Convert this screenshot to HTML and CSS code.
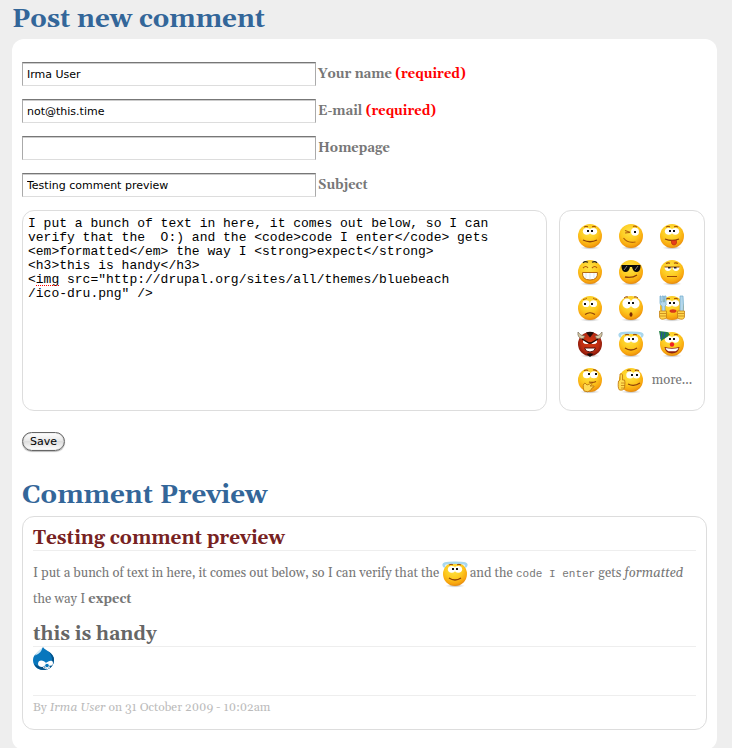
FILE: index.html
```
<!DOCTYPE html>
<html lang="en">
<head>
<meta charset="utf-8">
<title>Post new comment</title>
<link rel="stylesheet" href="styles.css">
</head>
<body>
<svg class="defs" aria-hidden="true">
  <defs>
    <radialGradient id="gold" cx="45%" cy="32%" r="68%">
      <stop offset="0" stop-color="#ffe648"/><stop offset=".55" stop-color="#fdc91f"/><stop offset=".85" stop-color="#f8a60f"/><stop offset="1" stop-color="#e58b10"/>
    </radialGradient>
    <radialGradient id="red" cx="50%" cy="45%" r="60%">
      <stop offset="0" stop-color="#d83a12"/><stop offset=".65" stop-color="#b92a10"/><stop offset="1" stop-color="#701208"/>
    </radialGradient>
    <radialGradient id="shade"><stop offset="0" stop-color="#777" stop-opacity=".6"/><stop offset="1" stop-color="#aaa" stop-opacity="0"/></radialGradient>
    <symbol id="ball" viewBox="0 0 28 28"><ellipse cx="14" cy="25.8" rx="10" ry="1.9" fill="url(#shade)"/><circle cx="14" cy="14" r="12" fill="url(#gold)"/></symbol>
    <symbol id="eyes" viewBox="0 0 28 28"><ellipse cx="10.7" cy="9.3" rx="3.8" ry="3.4" fill="#fff"/><ellipse cx="17.3" cy="9.3" rx="3.8" ry="3.4" fill="#fff"/><path d="M11 8h2v2h-2zM15 8h2v2h-2z" fill="#111"/><path d="M8 5q2-1.3 4-.2M16 4.8q2-1.1 4 .2" fill="none" stroke="#9c4a08"/></symbol>
    <symbol id="angel" viewBox="0 0 28 28"><use href="#ball"/><path d="M4 7C0 3.500 5 2.800 14 2.800S28 3.500 24 7" fill="none" stroke="#a9d7ee" stroke-width="2.6"/><use href="#eyes"/><path d="M8 18q6 4 12 0" fill="none" stroke="#8c3f08" stroke-width="1.3"/></symbol>
  </defs>
</svg>
<main class="page">
  <h1 class="heading">Post new comment</h1>
  <div class="content">
    <form class="comment-form">
      <div class="field"><input id="name" type="text" value="Irma User"><label for="name">Your name <span class="required">(required)</span></label></div>
      <div class="field"><input id="mail" type="text" value="not@this.time"><label for="mail">E-mail <span class="required">(required)</span></label></div>
      <div class="field"><input id="homepage" type="text"><label for="homepage">Homepage</label></div>
      <div class="field"><input id="subject" type="text" value="Testing comment preview"><label for="subject">Subject</label></div>
      <div class="editor">
        <div class="editor-text">
          <textarea aria-label="Comment" spellcheck="false">I put a bunch of text in here, it comes out below, so I can
verify that the  O:) and the &lt;code&gt;code I enter&lt;/code&gt; gets
&lt;em&gt;formatted&lt;/em&gt; the way I &lt;strong&gt;expect&lt;/strong&gt;
&lt;h3&gt;this is handy&lt;/h3&gt;
&lt;img src="http://drupal.org/sites/all/themes/bluebeach
/ico-dru.png" /&gt;</textarea>
          <span class="spelling"></span>
        </div>
        <div class="smileys">
          <svg viewBox="0 0 28 28"><use href="#ball"/><use href="#eyes"/><path d="M7 18q7 3.5 14 0" fill="none" stroke="#8c3f08" stroke-width="1.3"/></svg>
          <svg viewBox="0 0 28 28"><use href="#ball"/><circle cx="18" cy="9.800" r="4" fill="#fff"/><path d="M17 9h2v2h-2z" fill="#111"/><path d="M8 8.500l5 1.800-5 .7M6.500 16q4 5.500 12 4M16 4.500q2-.8 4 .5" fill="none" stroke="#b0600c" stroke-width="1.2"/></svg>
          <svg viewBox="0 0 28 28"><use href="#ball"/><use href="#eyes"/><path d="M7 17q7 3 14 0" fill="none" stroke="#8c3f08" stroke-width="1.3"/><path d="M13.500 18.500h5v2.500q-.5 2-2.500 2t-2.500-2z" fill="#e63d18" stroke="#b52d12" stroke-width=".7"/></svg>

          <svg viewBox="0 0 28 28"><use href="#ball"/><path d="M7 10q3-3 5 0M16 10q3-3 5 0" fill="none" stroke="#b45a08" stroke-width="1.2"/><path d="M7 4.800q2-2 5-.5M16 4.300q3-1.500 5 .5" fill="none" stroke="#222" stroke-width="1.200"/><path d="M6.500 14.500h15q.5 7.500-7.500 7.500t-7.500-7.500z" fill="#fff" stroke="#b46a10"/><path d="M10 15v5M14 15v6M18 15v5" stroke="#c6e1ef" stroke-width=".7"/></svg>
          <svg viewBox="0 0 28 28"><use href="#ball"/><path d="M4.500 7h19v2q-.5 5-4 5t-4.500-5h-2q-1 5-4.500 5t-4-5z" fill="#0b0b0b"/><path d="M7 12l3-4M18 12l3-4" stroke="#858585"/><path d="M8 19q7 1.500 12-2" fill="none" stroke="#8c3f08" stroke-width="1.300"/></svg>
          <svg viewBox="0 0 28 28"><use href="#ball"/><path d="M6.500 9h7q-.3 4-3.500 4t-3.500-4zM14.500 9h7q-.3 4-3.500 4t-3.500-4z" fill="#fff"/><path d="M8 5.500q2-1 4-.3M16 5.200q2-.7 4 .3M6.500 9h15M9 18.500h10" fill="none" stroke="#9c4a08" stroke-width="1.200"/><path d="M10 9h2.500v1.500H10zM16 9h2.500v1.500H16z" fill="#222"/></svg>

          <svg viewBox="0 0 28 28"><use href="#ball"/><ellipse cx="10" cy="9.700" rx="3.600" ry="3.400" fill="#fff"/><ellipse cx="17.500" cy="9.700" rx="3.600" ry="3.400" fill="#fff"/><path d="M8 9h2v2H8zM15 9h2v2h-2z" fill="#111"/><path d="M7 5.500q3-.3 4-1.500M17 4q1 1.200 4 1.500" fill="none" stroke="#b0600c"/><path d="M9 20.500q5-3.500 10 0" fill="none" stroke="#8c3f08" stroke-width="1.200"/></svg>
          <svg viewBox="0 0 28 28"><use href="#ball"/><ellipse cx="10" cy="9.500" rx="4.600" ry="5" fill="#fff"/><ellipse cx="18" cy="9.500" rx="4.600" ry="5" fill="#fff"/><path d="M11 8h2v2h-2zM15 8h2v2h-2z" fill="#111"/><path d="M7 4q2-2 4-1M17 3q2-1 4 1" fill="none" stroke="#9c4a08"/><ellipse cx="14" cy="20.500" rx="1.500" ry="2.300" fill="#7b2a04"/></svg>
          <svg viewBox="0 0 28 28"><use href="#ball"/><use href="#eyes"/><ellipse cx="15" cy="17" rx="3.500" ry="1.800" fill="#d93819"/><path d="M2 2v7q0 2 2 3v11h3V12q2-1 1-3V2H6.500v6h-1V2H4v6H3V2zM22 2h3q1 9 0 21h-3z" fill="#b5d8ec" stroke="#6eaacb" stroke-width=".7"/><path d="M1.500 17h7v7q-6 3-7-1zM19.500 17h7v6q-1 4-7 1zM2 19.500h6M2 22h6M20 19.500h6M20 22h6" fill="#ffd64b" stroke="#c78213" stroke-width=".8"/></svg>

          <svg viewBox="0 0 28 28"><ellipse cx="14" cy="25.800" rx="10" ry="1.900" fill="url(#shade)"/><circle cx="14" cy="14" r="12" fill="url(#red)"/><path d="M2 2q-1 6 5 7l2-3Q4 6 2 2zM26 2q1 6-5 7l-2-3q5 0 7-4z" fill="#d8c9a5" stroke="#786c58" stroke-width=".7"/><path d="M10 2.500q4-1.500 8 0l-4 5z" fill="#250d09"/><path d="M7 10l6 3.500q-4 1.500-6-1zM21 10l-6 3.500q4 1.500 6-1z" fill="#fff"/><path d="M6 9l7 4h2l7-4" fill="none" stroke="#260805" stroke-width="1.300"/><path d="M8.500 18h11q-1 4-5.500 4t-5.500-4z" fill="#fff" stroke="#570c06"/><path d="M10.500 24q3.500-1.500 7 0L14 27z" fill="#180b09"/></svg>
          <svg viewBox="0 0 28 28"><use href="#angel"/></svg>
          <svg viewBox="0 0 28 28"><use href="#ball"/><use href="#eyes"/><path d="M1 1l8 1q3 0 1.500 4L3 11z" fill="#238044"/><path d="M4 2l-1 7M7 2l-1 6" stroke="#24539b" stroke-width="1.200"/><path d="M6.500 17q7.500 2 15 0-1 6.500-7.500 6.500t-7.500-6.500z" fill="#8d2111"/><path d="M7.500 18q6.500 1.500 13 0-1 3-3 3.300h-7q-2-.3-3-3.300z" fill="#fff"/><circle cx="14" cy="14.500" r="2.200" fill="#f02025"/></svg>

          <svg viewBox="0 0 28 28"><use href="#ball"/><ellipse cx="10.700" cy="8.800" rx="3.900" ry="3.500" fill="#fff"/><ellipse cx="18" cy="8.800" rx="3.900" ry="3.500" fill="#fff"/><path d="M12 7h2v2h-2zM19 7h2v2h-2z" fill="#111"/><path d="M8 4.500q3-1 4 0M17 4q2-.5 4 1M13 16q4 1 7-.5" fill="none" stroke="#9c4a08" stroke-width="1.200"/><path d="M8 25q-2-7 1-8l2 2 5-2q1 1-2 3h4q1 1-2 2l-1 2q-3 3-7 1z" fill="#ffda54" stroke="#bf7910" stroke-width=".9"/></svg>
          <svg viewBox="0 0 28 28"><use href="#ball"/><ellipse cx="13" cy="9" rx="3.700" ry="3.500" fill="#fff"/><ellipse cx="19.500" cy="9" rx="3.700" ry="3.500" fill="#fff"/><path d="M14 8h2v2h-2zM19 8h2v2h-2z" fill="#111"/><path d="M10 4.500q2-1 4 0M18 4.500q2-1 4 0M11 18q6 3 12-1" fill="none" stroke="#8c3f08" stroke-width="1.200"/><path d="M3 14V8q2-1 2.500 1v5h2q1 1 0 8-1 3-5 2-2-2-1-9z" fill="#ffdc50" stroke="#c47d12" stroke-width=".9"/><path d="M4 17h4M4 19.500h4M4 22h3" stroke="#c47d12" stroke-width=".8"/></svg>
          <a href="#">more...</a>
        </div>
      </div>
      <button class="save" type="button">Save</button>
    </form>
    <h2 class="heading">Comment Preview</h2>
    <article class="preview">
      <h3 class="subject">Testing comment preview</h3>
      <p>I put a bunch of text in here, it comes out below, so I can verify that the <svg class="inline-smiley" viewBox="0 0 28 28"><use href="#angel"/></svg> and the <code>code I enter</code> gets <em>formatted</em> the way I <strong>expect</strong></p>
      <h3>this is handy</h3>
      <svg class="drop" viewBox="0 0 21 24"><path d="M10 0c2 4 11 5 11 13C21 19 16.500 23 10.500 23S0 19 0 13C0 6 8 5 10 0z" fill="#0877bd"/><path d="M15 4q6 4 6 9-.5 9-10 10-7 0-10-6 10 6 18-4 0-5-4-9z" fill="#045188"/><path d="M9 1q0 5-7 7.500Q3 5 9 1z" fill="#cfe8f6"/><path d="M5 17c0-5 6-4 8-1 2-2 7-4 7 0 0 4-4 3-6 1-2 1-3 3-5 3s-4-1-4-3z" fill="#fff"/><circle cx="14" cy="18.500" r="2.300" fill="#0877bd" stroke="#fff"/><path d="M10 20.500q4 2.500 7 0" fill="none" stroke="#fff"/></svg>
      <footer>By <em>Irma User</em> on 31 October 2009 - 10:02am</footer>
    </article>
  </div>
</main>
</body>
</html>
```
FILE: styles.css
```
* { box-sizing: border-box; }
body {
  margin: 0;
  background: #eee;
  color: #777;
  font: 13px/26px Georgia, Gelasio, "Liberation Serif", serif;
}
.defs { position: absolute; width: 0; height: 0; }
.page { padding: 0 15px 0 12px; }
h1, h2, h3, p { margin: 0; }
.heading { color: #369; font-size: 26px; line-height: 36px; }
.page > .heading { padding: 2px 0 1px; }
.content { padding: 23px 10px 20px; border-radius: 12px; background: #fff; }
.field { display: flex; align-items: center; gap: 2px; height: 24px; margin-bottom: 13px; }
.field input {
  width: 294px;
  height: 24px;
  padding: 0 4px;
  border: 1px solid #aaa;
  border-top-color: #777;
  border-bottom-color: #ddd;
  background: #fff;
  box-shadow: inset 0 1px #ccc;
  color: #000;
  font: 11px "Lucida Grande", "DejaVu Sans", sans-serif;
}
.field label { font-weight: bold; }
.required { color: red; }
.editor { display: flex; gap: 12px; padding-right: 2px; }
.editor-text { position: relative; flex: 1; display: flex; }
textarea {
  flex: 1;
  min-width: 0;
  height: 201px;
  padding: 6px 5px;
  border: 1px solid #ddd;
  border-radius: 12px;
  resize: none;
  color: #000;
  font: 13px/14px "Liberation Mono", monospace;
}
.spelling { position: absolute; left: 14px; top: 75px; width: 23px; border-top: 1px dotted red; }
.smileys {
  display: grid;
  grid-template-columns: repeat(3, 41px);
  grid-auto-rows: 36px;
  align-content: start;
  justify-content: center;
  justify-items: center;
  align-items: center;
  width: 146px;
  padding: 7px 2px 0 0;
  border: 1px solid #ddd;
  border-radius: 12px;
}
.smileys svg { width: 28px; height: 28px; }
.smileys a { color: #777; text-decoration: none; }
.save {
  display: block;
  height: 19px;
  margin: 21px 0 27px;
  padding: 0 7px;
  border: 1px solid #666;
  border-radius: 10px;
  background: linear-gradient(#fff, #e6e6e6 50%, #ddd 50%, #fff);
  box-shadow: inset 0 0 1px #777, 0 1px 1px #bbb;
  color: #000;
  font: 11px "Lucida Grande", "DejaVu Sans", sans-serif;
}
.preview { margin-top: 2px; padding: 9px 10px; border: 1px solid #ddd; border-radius: 12px; }
.preview h3 { border-bottom: 1px solid #eee; color: #666; font-size: 19px; line-height: 24px; }
.preview .subject { color: #722; }
.preview p { padding: 9px 0 10px; }
.inline-smiley { width: 28px; height: 28px; margin: -4px -2px; vertical-align: middle; }
code { font: 11px "Liberation Mono", monospace; }
.drop { display: block; width: 21px; height: 24px; margin-bottom: 24px; }
.preview footer { border-top: 1px solid #eee; color: #bbb; font-size: 12px; line-height: 24px; }
```
